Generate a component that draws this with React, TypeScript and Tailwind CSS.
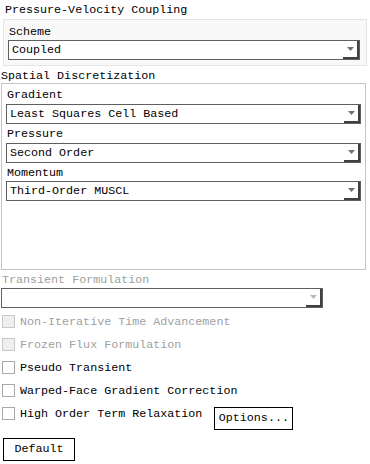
const font = { fontFamily: '"Liberation Mono", "DejaVu Sans Mono", monospace' };

function Arrow({ disabled }: { disabled?: boolean }) {
  return (
    <svg width="7" height="4" viewBox="0 0 7 4" className="block">
      <path d="M0 0h7L3.5 4z" fill={disabled ? "#b8b8b8" : "#707070"} />
    </svg>
  );
}

function Select({ value, className = "", disabled }: { value?: string; className?: string; disabled?: boolean }) {
  return (
    <div className={`flex h-[20px] items-stretch border border-[#5f5f5f] bg-white ${className}`}>
      <span className="flex-1 truncate pl-[3px] leading-[18px] text-black">{value}</span>
      <span className="flex w-[16px] items-center justify-center border-r-2 border-b-2 border-r-[#404040] border-b-[#404040] bg-white">
        <Arrow disabled={disabled} />
      </span>
    </div>
  );
}

function Check({ label, disabled }: { label: string; disabled?: boolean }) {
  return (
    <div className="flex h-[23px] items-center gap-[5px] pl-[2px]">
      <span
        className={`h-[13px] w-[13px] shrink-0 border ${
          disabled ? "border-[#c8c8c8] bg-[#efefef]" : "border-[#a8a8a8] bg-white"
        }`}
      />
      <span className={disabled ? "text-[#a0a0a0]" : "text-black"}>{label}</span>
    </div>
  );
}

export default function App() {
  return (
    <div className="h-[464px] w-[370px] overflow-hidden bg-white text-[11.7px] leading-[14px] text-black" style={font}>
      <div className="pl-[5px] pt-[3px]">Pressure-Velocity Coupling</div>
      <div className="mx-[3px] mt-[2px] h-[47px] border border-[#e4e4e4] bg-[#f9f9f9] px-[4px] pt-[5px]">
        <div className="pl-[1px]">Scheme</div>
        <Select value="Coupled" className="mt-[1px] mr-[2px]" />
      </div>

      <div className="pl-[1px] pt-[3px]">Spatial Discretization</div>
      <div className="ml-[1px] mr-[4px] h-[187px] border border-[#c4c4c4] bg-white px-[4px] pt-[4px]">
        <div className="pl-[1px]">Gradient</div>
        <Select value="Least Squares Cell Based" className="mt-[2px]" />
        <div className="mt-[3px] pl-[1px]">Pressure</div>
        <Select value="Second Order" className="mt-[2px]" />
        <div className="mt-[3px] pl-[1px]">Momentum</div>
        <Select value="Third-Order MUSCL" className="mt-[1px]" />
      </div>

      <div className="pl-[2px] pt-[3px] text-[#a0a0a0]">Transient Formulation</div>
      <Select disabled className="ml-[1px] mt-[1px] w-[322px]" />

      <div className="mt-[2px]">
        <Check label="Non-Iterative Time Advancement" disabled />
        <Check label="Frozen Flux Formulation" disabled />
        <Check label="Pseudo Transient" />
        <Check label="Warped-Face Gradient Correction" />
        <div className="flex items-start">
          <Check label="High Order Term Relaxation" />
          <button className="ml-[12px] mt-[5px] h-[23px] w-[79px] border border-black bg-white text-center leading-[21px] text-black">
            Options...
          </button>
        </div>
      </div>

      <button className="ml-[3px] mt-[8px] h-[23px] w-[72px] border border-black bg-white text-center leading-[21px] text-black">
        Default
      </button>
    </div>
  );
}
